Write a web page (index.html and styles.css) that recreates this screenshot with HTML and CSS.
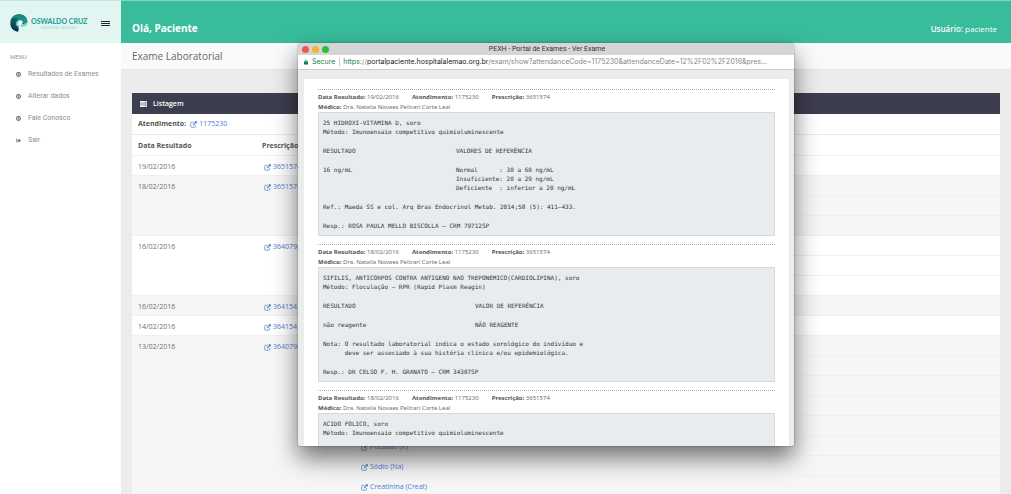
FILE: index.html
```html
<!DOCTYPE html>
<html lang="pt-BR">
<head>
<meta charset="utf-8">
<title>Portal de Exames</title>
<link rel="stylesheet" href="styles.css">
</head>
<body>
<svg class="defs" aria-hidden="true">
  <symbol id="ext" viewBox="0 0 16 16"><path d="M8.5 3H3.8A2.3 2.3 0 0 0 1.500 5.300V12a2.300 2.300 0 0 0 2.300 2.300h6.800A2.300 2.300 0 0 0 12.900 12V9.500" fill="none" stroke="currentColor" stroke-width="1.500"/><path d="M10 .8h5.400v5.400l-1.900-1.900-5.700 5.800-1.600-1.700 5.700-5.700z" fill="currentColor"/></symbol>
  <symbol id="arrow" viewBox="0 0 16 16"><circle cx="8" cy="8" r="6" fill="none" stroke="currentColor" stroke-width="3.500"/><path d="M6.500 4.500 10.500 8l-4 3.500z" fill="currentColor"/></symbol>
  <symbol id="exit" viewBox="0 0 16 16"><path d="M6 3H2v10h4" fill="none" stroke="currentColor" stroke-width="2"/><path d="M5 6h4V2l7 6-7 6v-4H5z" fill="currentColor"/></symbol>
</svg>
<div class="app">
  <aside class="sidebar">
    <div class="brand">
      <svg class="brand-mark" viewBox="0 0 54 54" aria-hidden="true">
        <defs><linearGradient id="g" x1="0" y1="1" x2="1" y2="0"><stop offset="0" stop-color="#07384a"/><stop offset=".5" stop-color="#12606a"/><stop offset="1" stop-color="#35c2ae"/></linearGradient></defs>
        <path d="M24 53C9 50 0 40 1 25 2 10 14 1 28 1c13 0 23 9 25 23-5 5-11 7-18 6l3-8-9-5-9 6-1 10 7 6z" fill="url(#g)"/>
        <path d="M2 20C5 8 15 1 28 1c12 0 21 7 24 17-8-7-18-8-27-3C17 9 9 11 2 20z" fill="#178a88"/>
        <path d="M19 33c-1-9 4-16 11-16l8 5-3 8c6 1 13-1 18-6 0 7-4 12-8 13-6 2-12 1-16-2l-3 4z" fill="#70d4c5"/>
        <path d="m26 22 9-2 3 6-6 9-8-3z" fill="#effaf7"/>
        <path d="M2 30c6 12 13 16 24 13l-2 10C12 51 4 43 2 30z" fill="#062b3d"/>
      </svg>
      <div class="brand-text"><strong>OSWALDO CRUZ</strong><small>HOSPITAL ALEMÃO</small></div>
      <button class="burger" type="button" aria-label="Menu"><span></span><span></span><span></span></button>
    </div>
    <nav class="menu">
      <h2>MENU</h2>
      <a href="#"><svg><use href="#arrow"/></svg>Resultados de Exames</a>
      <a href="#"><svg><use href="#arrow"/></svg>Alterar dados</a>
      <a href="#"><svg><use href="#arrow"/></svg>Fale Conosco</a>
      <a href="#"><svg><use href="#exit"/></svg>Sair</a>
    </nav>
  </aside>
  <main class="main">
    <header class="topbar"><strong class="hello">Olá, Paciente</strong><span class="user"><b>Usuário:</b> paciente</span></header>
    <h1 class="page-title">Exame Laboratorial</h1>
    <section class="panel">
      <h2 class="panel-head"><svg viewBox="0 0 16 14" aria-hidden="true"><path d="M0 0h16v4H0zM0 5h16v4H0zM0 10h16v4H0z" fill="#fff"/><path d="M9 2h5M4 7h10M9 12h5" stroke="#3d3d50" stroke-width="1"/></svg>Listagem</h2>
      <p class="attendance"><b>Atendimento:</b><a href="#"><svg><use href="#ext"/></svg>1175230</a></p>
      <table class="list">
        <colgroup><col class="c-date"><col class="c-presc"><col></colgroup>
        <thead><tr><th>Data Resultado</th><th>Prescrição</th><th></th></tr></thead>
        <tbody><tr><td>19/02/2016</td><td><a href="#"><svg><use href="#ext"/></svg>3651574</a></td><td></td></tr></tbody>
        <tbody><tr><td rowspan="3">18/02/2016</td><td rowspan="3"><a href="#"><svg><use href="#ext"/></svg>3651574</a></td><td></td></tr><tr><td></td></tr><tr><td></td></tr></tbody>
        <tbody><tr><td rowspan="3">16/02/2016</td><td rowspan="3"><a href="#"><svg><use href="#ext"/></svg>3640798</a></td><td></td></tr><tr><td></td></tr><tr><td></td></tr></tbody>
        <tbody><tr><td>16/02/2016</td><td><a href="#"><svg><use href="#ext"/></svg>364154</a></td><td></td></tr></tbody>
        <tbody><tr><td>14/02/2016</td><td><a href="#"><svg><use href="#ext"/></svg>364154</a></td><td></td></tr></tbody>
        <tbody><tr><td rowspan="8">13/02/2016</td><td rowspan="8"><a href="#"><svg><use href="#ext"/></svg>3640798</a></td><td></td></tr><tr><td></td></tr><tr><td></td></tr><tr><td></td></tr><tr><td></td></tr>
          <tr><td><a href="#"><svg><use href="#ext"/></svg>Potássio (K)</a></td></tr>
          <tr><td><a href="#"><svg><use href="#ext"/></svg>Sódio (Na)</a></td></tr>
          <tr><td><a href="#"><svg><use href="#ext"/></svg>Creatinina (Creat)</a></td></tr></tbody>
      </table>
    </section>
  </main>
</div>
<div class="window" role="dialog" aria-labelledby="wt">
  <div class="titlebar"><button class="dot red" type="button" aria-label="Fechar"></button><button class="dot yellow" type="button" aria-label="Minimizar"></button><button class="dot green" type="button" aria-label="Ampliar"></button><span id="wt">PEXH - Portal de Exames - Ver Exame</span></div>
  <div class="address"><svg viewBox="0 0 10 12" aria-hidden="true"><path d="M0 5h10v7H0z" fill="#0b8043"/><path d="M2.500 5V3.500a2.500 2.500 0 0 1 5 0V5" fill="none" stroke="#0b8043" stroke-width="1.600"/></svg><span class="secure">Secure</span><span class="url"><i>https</i>://<b>portalpaciente.hospitalalemao.org.br</b>/exam/show?attendanceCode=1175230&amp;attendanceDate=12%2F02%2F2016&amp;pres...</span></div>
  <div class="viewport">
    <div class="sheet">
      <article class="exam">
        <div class="meta"><span><b>Data Resultado:</b> 19/02/2016</span><span><b>Atendimento:</b> 1175230</span><span><b>Prescrição:</b> 3651574</span></div>
        <div class="meta"><span><b>Médico:</b> Dra. Natalia Novaes Pelizari Corte Leal</span></div>
        <div class="report">
<pre>25 HIDROXI-VITAMINA D, soro
Método: Imunoensaio competitivo quimioluminescente</pre>
          <div class="cols"><pre>RESULTADO</pre><pre>VALORES DE REFERÊNCIA</pre></div>
          <div class="cols"><pre>16 ng/mL</pre><pre>Normal      : 30 a 60 ng/mL
Insuficiente: 20 a 29 ng/mL
Deficiente  : inferior a 20 ng/mL</pre></div>
<pre>Ref.: Maeda SS e col. Arq Bras Endocrinol Metab. 2014;58 (5): 411–433.</pre>
<pre>Resp.: ROSA PAULA MELLO BISCOLLA – CRM 79712SP</pre>
        </div>
      </article>
      <article class="exam">
        <div class="meta"><span><b>Data Resultado:</b> 18/02/2016</span><span><b>Atendimento:</b> 1175230</span><span><b>Prescrição:</b> 3651574</span></div>
        <div class="meta"><span><b>Médico:</b> Dra. Natalia Novaes Pelizari Corte Leal</span></div>
        <div class="report wide">
<pre>SIFILIS, ANTICORPOS CONTRA ANTIGENO NAO TREPONEMICO(CARDIOLIPINA), soro
Método: Floculação – RPR (Rapid Plasm Reagin)</pre>
          <div class="cols"><pre>RESULTADO</pre><pre>VALOR DE REFERÊNCIA</pre></div>
          <div class="cols"><pre>não reagente</pre><pre>NÃO REAGENTE</pre></div>
<pre>Nota: O resultado laboratorial indica o estado sorológico do indivíduo e
      deve ser associado à sua história clínica e/ou epidemiológica.</pre>
<pre>Resp.: DR CELSO F. H. GRANATO – CRM 34307SP</pre>
        </div>
      </article>
      <article class="exam">
        <div class="meta"><span><b>Data Resultado:</b> 18/02/2016</span><span><b>Atendimento:</b> 1175230</span><span><b>Prescrição:</b> 3651574</span></div>
        <div class="meta"><span><b>Médico:</b> Dra. Natalia Novaes Pelizari Corte Leal</span></div>
        <div class="report last">
<pre>ACIDO FOLICO, soro
Método: Imunoensaio competitivo quimioluminescente</pre>
        </div>
      </article>
    </div>
  </div>
</div>
</body>
</html>
```
FILE: styles.css
```css
* { box-sizing: border-box; }
html { height: 100%; }
body { margin: 0; height: 100%; overflow: hidden; position: relative; font: 7px/10px "Open Sans", sans-serif; color: #6f6f6f; background: #ececec; }
h1, h2, p, pre { margin: 0; font-weight: 400; }
button { padding: 0; border: 0; background: none; }
a { color: #4a80d4; text-decoration: none; }
svg { flex: none; }
.defs { position: absolute; width: 0; height: 0; }
.app { display: flex; height: 100%; overflow: hidden; }

.sidebar { width: 121px; flex: none; background: #fff; }
.brand { display: flex; align-items: center; height: 43px; padding: 2px 11px 0 10px; background: #e3f5f1; border-top: 1px solid #c3e8df; }
.brand-mark { width: 18px; height: 18px; }
.brand-text { display: flex; flex-direction: column; align-items: center; margin-left: 3px; }
.brand-text strong { font: 900 7px/9px Lato, sans-serif; color: #2aa39f; white-space: nowrap; }
.brand-text small { font: 4px/4px Lato, sans-serif; color: #a5d5d1; }
.burger { display: flex; flex-direction: column; gap: 1px; width: 9px; margin-left: auto; }
.burger span { height: 1px; background: #1e2d2c; }
.menu { display: flex; flex-direction: column; gap: 10px; padding: 9px 10px; font: 7px/12px Roboto, sans-serif; color: #999; }
.menu h2 { font-size: 6px; line-height: 10px; margin-bottom: -4px; }
.menu a { display: flex; align-items: center; gap: 7px; padding-left: 6px; color: #8e8e8e; }
.menu svg { width: 5px; height: 5px; color: #666; }

.main { flex: 1; min-width: 0; }
.topbar { display: flex; align-items: center; justify-content: space-between; height: 43px; padding: 12px 14px 0 11px; background: #38bc9c; border-top: 1px solid #7fd6c0; color: #fff; }
.hello { font-size: 10px; font-weight: 700; }
.user { font-size: 8px; padding-top: 2px; }
.user b { font-weight: 600; }
.page-title { padding: 0 11px; font-size: 10px; line-height: 26px; background: #fafafa; border-bottom: 1px solid #e5e5e5; color: #666; }
.panel { margin: 23px 11px 0; background: #fff; }
.panel-head { display: flex; align-items: center; gap: 6px; height: 21px; padding: 0 8px; background: #3d3d50; color: #fff; font-size: 7px; font-weight: 600; }
.panel-head svg { width: 7px; height: 6px; }
.attendance { display: flex; align-items: center; gap: 4px; height: 21px; padding: 0 6px; border-bottom: 1px solid #ececec; }
.attendance b, .list th { color: #555; font-weight: 700; }
.panel a { display: flex; align-items: center; gap: 2px; }
.panel a svg { width: 7px; height: 7px; color: #3c74c8; }
.list { width: 100%; border-collapse: separate; border-spacing: 0; table-layout: fixed; }
.c-date { width: 124px; }
.c-presc { width: 99px; }
.list th, .list td { height: 20px; padding: 6px 6px 3px; vertical-align: top; text-align: left; border-bottom: 1px solid #f0f0f0; }
.list th { height: 21px; }
.list td + td a { margin-left: 2px; }
.list tbody:nth-of-type(even) td { background: #f6f6f6; }

.window { position: absolute; left: 298px; top: 43px; width: 496px; height: 403px; display: flex; flex-direction: column; overflow: hidden; border-radius: 4px 4px 2px 2px; background: #ececec; box-shadow: 0 12px 24px rgba(0,0,0,.55), 0 0 2px rgba(0,0,0,.4); }
.titlebar { display: flex; align-items: center; gap: 3px; height: 12px; flex: none; padding: 0 4px; background: #d5d5d5; color: #333; font: 7px/12px Roboto, sans-serif; }
.titlebar span { flex: 1; text-align: center; padding-right: 28px; }
.dot { width: 7px; height: 7px; border-radius: 50%; }
.red { background: #f4564e; }
.yellow { background: #f6b52e; }
.green { background: #29bf3b; }
.address { display: flex; align-items: center; height: 15px; flex: none; padding: 0 6px; background: #fff; border-bottom: 1px solid #ccc; font: 7px/14px Inter, sans-serif; color: #888; white-space: nowrap; }
.address svg { width: 4px; height: 6px; }
.secure { color: #138043; padding: 0 4px; }
.url { border-left: 1px solid #ccc; line-height: 8px; padding-left: 3px; }
.url i { font-style: normal; color: #138043; }
.url b { font-weight: 400; color: #222; }
.viewport { flex: 1; min-height: 0; overflow: hidden; padding: 9px 5px 0 6px; }
.sheet { background: #fff; padding: 10px 14px; }
.exam { margin-bottom: 8px; padding-top: 2px; border-top: 1px dotted #aaa; font-family: "Noto Sans", sans-serif; font-size: 6px; }
.meta { display: flex; gap: 13px; }
.meta b { color: #555; }
.report { display: flex; flex-direction: column; gap: 10px; padding: 5px 4px; background: #e8ecef; border: 1px solid #d3d9dc; color: #333; }
.report pre { font: 6px/9px "DejaVu Sans Mono", monospace; }
.cols { display: grid; grid-template-columns: 133px 1fr; }
.wide .cols { grid-template-columns: 152px 1fr; }
.last { min-height: 60px; }
```
